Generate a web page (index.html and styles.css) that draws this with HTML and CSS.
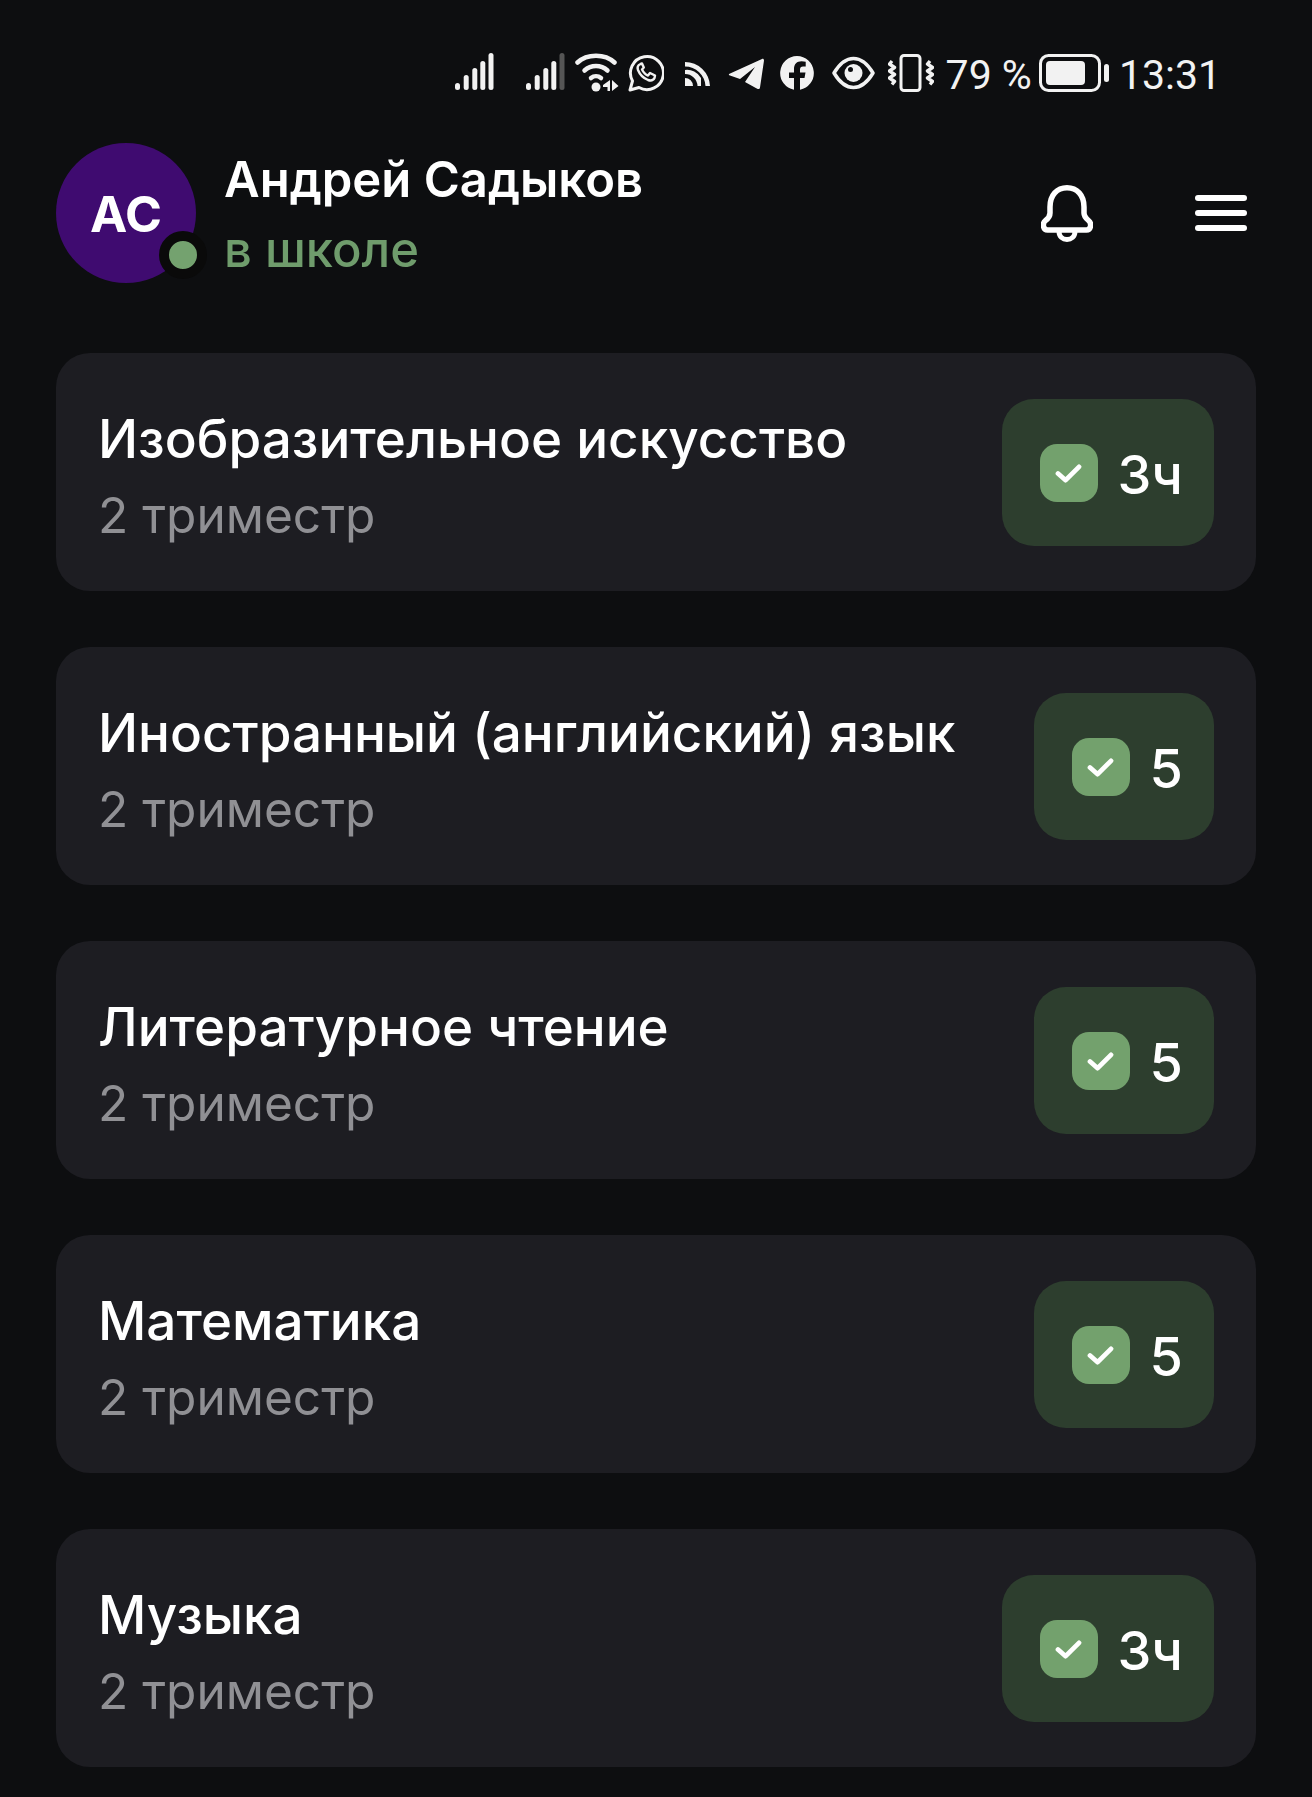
FILE: index.html
```html
<!DOCTYPE html>
<html lang="ru">
<head>
    <meta charset="UTF-8">
    <title>Оценки</title>
    <link rel="stylesheet" href="styles.css">
</head>
<body>
    <div class="statusbar">
        <svg class="ic ic-signal" viewBox="0 0 39 37"><g fill="#f2f2f2"><rect x="0" y="30" width="5" height="7" rx="2.5"/><rect x="8.700" y="22" width="5" height="15" rx="2.5"/><rect x="17.300" y="15" width="5" height="22" rx="2.5"/><rect x="25.300" y="8" width="5" height="29" rx="2.5"/><rect x="33.500" y="0" width="5" height="37" rx="2.5"/></g></svg>
        <svg class="ic ic-signal2" viewBox="0 0 39 37"><g fill="#f2f2f2"><rect x="0" y="30" width="5" height="7" rx="2.5"/><rect x="8.700" y="22" width="5" height="15" rx="2.5"/><rect x="17.300" y="15" width="5" height="22" rx="2.5"/><rect x="25.300" y="8" width="5" height="29" rx="2.5"/><rect x="33.500" y="0" width="5" height="37" rx="2.5" fill="#555"/></g></svg>
        <svg class="ic ic-wifi" viewBox="0 0 44 39"><g fill="none" stroke="#f2f2f2" stroke-width="4.500" stroke-linecap="round"><path d="M2.500 9.500C12 .5 30 .5 39.500 9.500"/><path d="M9.500 17.500C16 11.500 26 11.500 32.500 17.500"/><path d="M16 25C19 22.500 23 22.500 26 25"/></g><circle cx="21" cy="34" r="4.500" fill="#f2f2f2"/><path d="M35 27v11h-2.500v-4H28v-2zM37 27l6.500 6-6.500 5z" fill="#f2f2f2"/></svg>
        <svg class="ic ic-whatsapp" viewBox="0 0 36 38"><path d="M2 36l2.500-9A16.500 16.500 0 1 1 11 33.500z" fill="none" stroke="#f2f2f2" stroke-width="3" stroke-linejoin="round"/><path d="M12.500 10c-2.500 1-3.500 3-2.500 6 2 5 5 8 10 10 3 1 5.500 0 6.500-2l.500-2.500-5-2.500-2 2.500c-3-1-5-4-6-6l1.800-2L14 9.500z" fill="none" stroke="#f2f2f2" stroke-width="2.400" stroke-linejoin="round"/></svg>
        <svg class="ic ic-rss" viewBox="0 0 25 24"><path d="M0 16a8 8 0 0 1 8 8H0zM0 8a16 16 0 0 1 16 8v8h-3.500A12.500 12.500 0 0 0 0 12zM0 0a25 25 0 0 1 25 24h-4.500A20.500 20.500 0 0 0 0 4.500z" fill="#f2f2f2"/></svg>
        <svg class="ic ic-telegram" viewBox="0 0 36 32"><path d="M1 16L34 1c1-.500 2 .200 2 1.500l-4 27c-.200 1.500-1.500 2-2.800 1.200L17 24l10-15-15 12-10-3.500c-1.300-.500-1.300-1-1-1.500z" fill="#f2f2f2"/></svg>
        <svg class="ic ic-fb" viewBox="0 0 34 34"><path d="M17 0a17 17 0 0 1 3 33.700V22h4.500l1-5.500H20v-3c0-2 1-3 3-3h2.700V5.700C24.500 5.500 23 5.300 21.500 5.300c-4.500 0-7.500 2.700-7.500 7.700v3.500H9V22h5v11.700A17 17 0 0 1 17 0z" fill="#f2f2f2"/></svg>
        <svg class="ic ic-eye" viewBox="0 0 43 34"><path d="M2 17C8 7 14 2.500 21.500 2.500S35 7 41 17c-6 10-12 14.500-19.500 14.500S8 27 2 17z" fill="none" stroke="#f2f2f2" stroke-width="3.500" stroke-linejoin="round"/><circle cx="21.500" cy="17" r="9" fill="#f2f2f2"/><circle cx="18.500" cy="13.500" r="2.500" fill="#0d0e10"/></svg>
        <svg class="ic ic-vibrate" viewBox="0 0 46 38"><rect x="13" y="1.500" width="19" height="35" rx="3" fill="none" stroke="#f2f2f2" stroke-width="3"/><g fill="none" stroke="#f2f2f2" stroke-width="3.400" stroke-linejoin="round"><path d="M4 7l-2.500 3 5 3.500-5 3.500 5 3.500-5 3.500 5 3.500-2.500 3"/><path d="M42 7l-2.500 3 5 3.500-5 3.500 5 3.500-5 3.500 5 3.500-2.500 3"/></g></svg>
        <span class="pct">79 %</span>
        <svg class="ic ic-battery" viewBox="0 0 70 38"><rect x="1.500" y="1.500" width="59" height="35" rx="8" fill="none" stroke="#f2f2f2" stroke-width="3"/><rect x="7" y="7" width="39" height="24" rx="4" fill="#f2f2f2"/><rect x="65" y="10" width="5" height="18" rx="2.500" fill="#f2f2f2"/></svg>
        <span class="clock">13:31</span>
    </div>

    <header class="top">
        <div class="avatar">
            <span class="avatar-text">АС</span>
            <span class="avatar-dot"></span>
        </div>
        <div class="who">
            <div class="who-name">Андрей Садыков</div>
            <div class="who-status">в школе</div>
        </div>
        <svg class="bell" viewBox="0 0 52 57"><path d="M9 22C9 10 16 2.800 26 2.800S43 10 43 22v6c0 3 1.500 5 4.500 7.500 3.500 3 2.500 9.500-2 9.500h-39c-4.500 0-5.500-6.500-2-9.500C8 33 9 31 9 28z" fill="none" stroke="#fff" stroke-width="5.500" stroke-linejoin="round"/><path d="M18 46c0 6 4 8.500 8 8.500s8-2.500 8-8.500" fill="none" stroke="#fff" stroke-width="5"/></svg>
        <div class="burger"><span></span><span></span><span></span></div>
    </header>

    <main class="list">
        <div class="card">
            <div class="card-text">
                <div class="card-title">Изобразительное искусство</div>
                <div class="card-sub">2 триместр</div>
            </div>
            <div class="mark">
                <span class="check"><svg viewBox="0 0 28 22"><path d="M3 11l8 7L25 4" fill="none" stroke="#fff" stroke-width="5" stroke-linecap="round" stroke-linejoin="round"/></svg></span>
                <span class="mark-val">3ч</span>
            </div>
        </div>
        <div class="card">
            <div class="card-text">
                <div class="card-title">Иностранный (английский) язык</div>
                <div class="card-sub">2 триместр</div>
            </div>
            <div class="mark">
                <span class="check"><svg viewBox="0 0 28 22"><path d="M3 11l8 7L25 4" fill="none" stroke="#fff" stroke-width="5" stroke-linecap="round" stroke-linejoin="round"/></svg></span>
                <span class="mark-val">5</span>
            </div>
        </div>
        <div class="card">
            <div class="card-text">
                <div class="card-title">Литературное чтение</div>
                <div class="card-sub">2 триместр</div>
            </div>
            <div class="mark">
                <span class="check"><svg viewBox="0 0 28 22"><path d="M3 11l8 7L25 4" fill="none" stroke="#fff" stroke-width="5" stroke-linecap="round" stroke-linejoin="round"/></svg></span>
                <span class="mark-val">5</span>
            </div>
        </div>
        <div class="card">
            <div class="card-text">
                <div class="card-title">Математика</div>
                <div class="card-sub">2 триместр</div>
            </div>
            <div class="mark">
                <span class="check"><svg viewBox="0 0 28 22"><path d="M3 11l8 7L25 4" fill="none" stroke="#fff" stroke-width="5" stroke-linecap="round" stroke-linejoin="round"/></svg></span>
                <span class="mark-val">5</span>
            </div>
        </div>
        <div class="card">
            <div class="card-text">
                <div class="card-title">Музыка</div>
                <div class="card-sub">2 триместр</div>
            </div>
            <div class="mark">
                <span class="check"><svg viewBox="0 0 28 22"><path d="M3 11l8 7L25 4" fill="none" stroke="#fff" stroke-width="5" stroke-linecap="round" stroke-linejoin="round"/></svg></span>
                <span class="mark-val">3ч</span>
            </div>
        </div>
    </main>
</body>
</html>
```

FILE: styles.css
```css
html, body {
    margin: 0;
    padding: 0;
}
body {
    width: 1312px;
    height: 1797px;
    overflow: hidden;
    background-color: #0d0e10;
    font-family: Inter, "Noto Sans", sans-serif;
    color: #fff;
}

/* status bar */
.statusbar {
    height: 53px;
    padding: 53px 91px 0 0;
    display: flex;
    justify-content: flex-end;
    align-items: flex-start;
}
.ic {
    display: block;
    flex: none;
}
.ic-signal { width: 39px; height: 37px; }
.ic-signal2 { width: 39px; height: 37px; margin-left: 32px; }
.ic-wifi { width: 44px; height: 39px; margin-left: 10px; }
.ic-whatsapp { width: 36px; height: 38px; margin-left: 9px; margin-top: 1px; }
.ic-rss { width: 25px; height: 24px; margin-left: 21px; margin-top: 9px; }
.ic-telegram { width: 36px; height: 32px; margin-left: 18px; margin-top: 5px; }
.ic-fb { width: 34px; height: 34px; margin-left: 16px; margin-top: 3px; }
.ic-eye { width: 43px; height: 34px; margin-left: 18px; margin-top: 3px; }
.ic-vibrate { width: 46px; height: 38px; margin-left: 13px; margin-top: 1px; }
.ic-battery { width: 70px; height: 38px; margin-left: 7px; margin-top: 1px; }
.pct, .clock {
    margin-top: -1px;
    font-family: Roboto, sans-serif;
    font-size: 41px;
    line-height: 46px;
    color: #f2f2f2;
}
.pct { margin-left: 12px; }
.clock { margin-left: 10px; }

/* header */
.top {
    height: 140px;
    margin-top: 37px;
    padding: 0 65px 0 56px;
    display: flex;
    align-items: center;
}
.avatar {
    position: relative;
    width: 140px;
    height: 140px;
    flex: none;
    border-radius: 50%;
    background-color: #3f0b70;
    display: flex;
    align-items: center;
    justify-content: center;
    font-size: 50px;
    font-weight: 700;
}
.avatar-text {
    padding-top: 2px;
}
.avatar-dot {
    position: absolute;
    left: 103px;
    top: 88px;
    width: 28px;
    height: 28px;
    border: 10px solid #0a0a0a;
    border-radius: 50%;
    background-color: #74a26f;
}
.who {
    margin-left: 28px;
    padding-top: 3px;
    flex: 1;
}
.who-name {
    font-size: 49px;
    font-weight: 600;
    line-height: 56px;
}
.who-status {
    margin-top: 14px;
    font-size: 49px;
    font-weight: 500;
    line-height: 56px;
    color: #6f9c6c;
}
.bell {
    width: 52px;
    height: 57px;
}
.burger {
    width: 52px;
    margin-left: 102px;
    display: flex;
    flex-direction: column;
    gap: 9px;
}
.burger span {
    height: 6px;
    border-radius: 3px;
    background-color: #fff;
}

/* list */
.list {
    margin: 70px 56px 0;
    display: flex;
    flex-direction: column;
    gap: 56px;
}
.card {
    height: 238px;
    box-sizing: border-box;
    padding: 0 42px;
    border-radius: 34px;
    background-color: #1d1d22;
    display: flex;
    align-items: center;
    justify-content: space-between;
}
.card-text {
    padding-top: 6px;
}
.card-title {
    font-size: 53px;
    font-weight: 500;
    line-height: 64px;
}
.card-sub {
    margin-top: 15px;
    font-size: 49.6px;
    line-height: 58px;
    color: #909094;
}
.mark {
    height: 147px;
    box-sizing: border-box;
    padding: 0 31px 0 38px;
    border-radius: 32px;
    background-color: #2d3e2e;
    display: flex;
    align-items: center;
    gap: 20px;
}
.check {
    width: 58px;
    height: 58px;
    margin-top: 2px;
    border-radius: 17px;
    background-color: #73a16d;
    display: flex;
    align-items: center;
    justify-content: center;
}
.check svg {
    width: 27px;
    height: 21px;
}
.mark-val {
    padding-top: 6px;
    font-size: 54px;
    font-weight: 500;
    line-height: 64px;
}
```
